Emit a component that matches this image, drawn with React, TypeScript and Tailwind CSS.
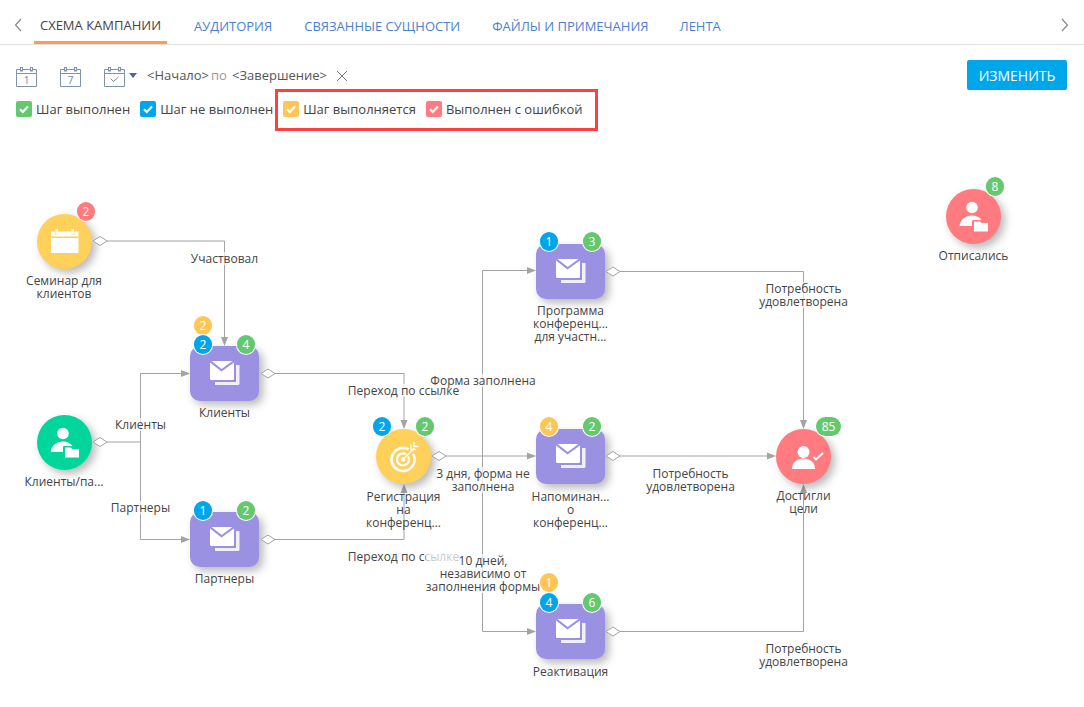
import React from "react";

type Badge = { x: number; y: number; n: string; c: string; w?: number };

const GREEN = "bg-[#64c86e]";
const BLUE = "bg-[#00a6ea]";
const YELLOW = "bg-[#ffc655]";
const RED = "bg-[#ff7b7f]";

function Check() {
  return (
    <svg width="16" height="16" viewBox="0 0 16 16">
      <path d="M4 8.2 L6.8 11 L12 5.6" fill="none" stroke="#fff" strokeWidth="2.2" />
    </svg>
  );
}

function Legend({ color, label }: { color: string; label: string }) {
  return (
    <div className="flex items-center gap-[4px]">
      <span className={`flex h-[16px] w-[16px] items-center justify-center rounded-[2px] ${color}`}>
        <Check />
      </span>
      <span className="whitespace-nowrap text-[13px] leading-[18px] text-[#444]">{label}</span>
    </div>
  );
}

function Cal({ text, check }: { text?: string; check?: boolean }) {
  return (
    <svg width="21" height="21" viewBox="0 0 21 21" fill="none" stroke="#7f93ad" strokeWidth="1">
      <path d="M0.5 3.5 H20.5 V20.5 H0.5 Z" />
      <path d="M0.5 7.5 H20.5" />
      <rect x="4.5" y="1.5" width="2" height="3.5" fill="#fff" />
      <rect x="14.5" y="1.5" width="2" height="3.5" fill="#fff" />
      {text && (
        <text x="10.5" y="17.5" textAnchor="middle" fontSize="10" fill="#6f85a0" stroke="none" fontFamily="'Open Sans', sans-serif">
          {text}
        </text>
      )}
      {check && <path d="M6.5 12.5 L9.5 15.5 L14.5 11" />}
    </svg>
  );
}

function Mail() {
  return (
    <svg width="30" height="25" viewBox="0 0 30 25" fill="#fff">
      <path d="M0 1.5 L11.5 10.5 L24 1.5 V17.5 Q24 19 22.5 19 H1.5 Q0 19 0 17.5 Z" />
      <path d="M1.5 0 H22.5 L11.7 8 Z" />
      <path d="M26 4 H29.5 V22.5 Q29.5 24 28 24 H5 V21 H26 Z" fill="#f1effc" />
    </svg>
  );
}

function PersonFolder() {
  return (
    <svg width="29" height="31" viewBox="0 0 29 31" fill="#fff">
      <circle cx="13" cy="6.5" r="5.8" />
      <path d="M0.5 25 C1.5 18 7 14.5 13 14.5 C17 14.5 20.5 16 22.5 19 H14 Q13 19 13 20 V25 Z" />
      <path d="M15 20.5 H21 L22.5 22 H29 V30.5 H15 Z" />
    </svg>
  );
}

function PersonCheck() {
  return (
    <svg width="32" height="24" viewBox="0 0 32 24" fill="#fff">
      <circle cx="11.5" cy="7" r="6" />
      <path d="M0 24 C0 17 5 13.5 11.5 13.5 C18 13.5 23 17 23 24 Z" />
      <path d="M21.5 12 L24 14.5 L31 8" fill="none" stroke="#fff" strokeWidth="1.8" />
    </svg>
  );
}

function CalWhite() {
  return (
    <svg width="28" height="25" viewBox="0 0 28 25" fill="#fff">
      <path d="M0 2.5 H4 V5.5 H7 V2.5 H20.5 V5.5 H23.5 V2.5 H27.5 V7.5 H0 Z" />
      <rect x="4.5" y="0" width="2.5" height="5" />
      <rect x="20.5" y="0" width="2.5" height="5" />
      <rect x="0" y="9" width="27.5" height="15" />
    </svg>
  );
}

function Target() {
  return (
    <svg width="32" height="32" viewBox="0 0 32 32" fill="none" stroke="#fff">
      <path d="M20.6 8.4 A11.5 11.5 0 1 0 25.1 12.9" strokeWidth="2.6" />
      <path d="M18 13.3 A6 6 0 1 0 20.2 15.5" strokeWidth="2.2" />
      <circle cx="15" cy="18.5" r="2.3" fill="#fff" stroke="none" />
      <path d="M15 18.5 L26 7.5" strokeWidth="1.4" />
      <path d="M23 3.5 V8.5 H28 M26 1 V5.5 H30.5" strokeWidth="1.4" />
    </svg>
  );
}

function Count({ x, y, n, c, w = 18 }: Badge) {
  return (
    <div
      className={`absolute flex h-[19px] items-center justify-center rounded-full text-[12px] leading-none text-white ring-1 ring-white ${c}`}
      style={{ left: x, top: y, width: w }}
    >
      {n}
    </div>
  );
}

function Node({
  x, y, w, shape, children,
}: { x: number; y: number; w: number; shape: string; children: React.ReactNode }) {
  return (
    <div
      className={`absolute flex h-[55px] items-center justify-center ${shape} shadow-[4px_4px_8px_rgba(0,0,0,0.28)]`}
      style={{ left: x, top: y, width: w }}
    >
      {children}
    </div>
  );
}

function Label({
  cx, y, lines, soft,
}: { cx: number; y: number; lines: string[]; soft?: boolean }) {
  return (
    <div
      className={`absolute -translate-x-1/2 whitespace-nowrap text-center text-[12px] leading-[13px] text-[#444] ${soft ? "bg-white/70" : ""}`}
      style={{ left: cx, top: y }}
    >
      {lines.map((l) => (
        <div key={l}>{l}</div>
      ))}
    </div>
  );
}

const diamonds: [number, number][] = [
  [93, 241], [261, 373.5], [93, 442], [261, 539.5], [432, 456],
  [606, 271.5], [606, 456], [606, 631.5],
];

const lines = [
  "M107 241 H224.5 V338",
  "M275 373.5 H404 V421",
  "M107 442 H140.5",
  "M140.5 373.5 V539.5",
  "M140.5 373.5 H182",
  "M140.5 539.5 H182",
  "M275 539.5 H404 V492",
  "M446 456 H528",
  "M482.5 270.5 V631.5",
  "M482.5 270.5 H528",
  "M482.5 631.5 H528",
  "M620 271.5 H803.5 V421",
  "M620 456 H768",
  "M620 631.5 H803.5 V492",
];

const arrows = [
  "M224.5 346 L221 337 H228 Z",
  "M404 429 L400.5 420 H407.5 Z",
  "M404 484 L400.5 493 H407.5 Z",
  "M190 373.5 L181 370 V377 Z",
  "M190 539.5 L181 536 V543 Z",
  "M536 270.5 L527 267 V274 Z",
  "M536 631.5 L527 628 V635 Z",
  "M536 456 L527 452.5 V459.5 Z",
  "M776 456 L767 452.5 V459.5 Z",
  "M803.5 429 L800 420 H807 Z",
  "M803.5 484 L800 493 H807 Z",
];

const TAB = "flex h-[45px] items-center pt-[10px] text-[13px] text-[#4b7fd0]";

export default function App() {
  return (
    <div className="h-[707px] w-[1084px] overflow-hidden bg-white font-['Open_Sans',sans-serif] text-[#444]">
      <div className="flex h-[45px] items-end border-b border-[#e0e0e0]">
        <svg width="34" height="45" viewBox="0 0 34 45" fill="none" stroke="#888" strokeWidth="1.2" className="shrink-0">
          <path d="M21 20 L15.5 26 L21 32" />
        </svg>
        <div className="flex h-[45px]">
          <div className="flex h-[45px] w-[133px] items-center justify-center border-b-[3px] border-[#ff9b57] pt-[12px] text-[13px] text-[#444]">
            СХЕМА КАМПАНИИ
          </div>
          <div className={`${TAB} pl-[27px]`}>АУДИТОРИЯ</div>
          <div className={`${TAB} pl-[32px]`}>СВЯЗАННЫЕ СУЩНОСТИ</div>
          <div className={`${TAB} pl-[32px]`}>ФАЙЛЫ И ПРИМЕЧАНИЯ</div>
          <div className={`${TAB} pl-[31px]`}>ЛЕНТА</div>
        </div>
        <div className="flex-1" />
        <svg width="34" height="45" viewBox="0 0 34 45" fill="none" stroke="#888" strokeWidth="1.2" className="shrink-0">
          <path d="M12 20 L17.5 26 L12 32" />
        </svg>
      </div>

      <div className="relative h-[662px]">
        <div className="flex items-start justify-between pl-[16px] pr-[17px] pt-[15px]">
          <div>
            <div className="flex h-[30px] items-center">
              <div className="mr-[23px] mt-[2px]"><Cal text="1" /></div>
              <div className="mr-[23px] mt-[2px]"><Cal text="7" /></div>
              <div className="mt-[2px]"><Cal check /></div>
              <svg width="12" height="6" viewBox="0 0 12 6" className="ml-[3px] mr-[7px] mt-[2px]">
                <path d="M1 0 H9 L5 5 Z" fill="#51688a" />
              </svg>
              <span className="pt-[1px] text-[13px] text-[#555]">&lt;Начало&gt;</span>
              <span className="ml-[2px] pt-[1px] text-[13px] text-[#999]">по</span>
              <span className="ml-[5px] pt-[1px] text-[13px] text-[#555]">&lt;Завершение&gt;</span>
              <svg width="12" height="12" viewBox="0 0 12 12" className="ml-[9px] mt-[1px]" fill="none" stroke="#777" strokeWidth="1">
                <path d="M1 1 L11 11 M11 1 L1 11" />
              </svg>
            </div>
            <div className="mt-[10px] flex items-center">
              <Legend color={GREEN} label="Шаг выполнен" />
              <div className="w-[10px]" />
              <Legend color={BLUE} label="Шаг не выполнен" />
              <div className="w-[10px]" />
              <Legend color={YELLOW} label="Шаг выполняется" />
              <div className="w-[10px]" />
              <Legend color={RED} label="Выполнен с ошибкой" />
            </div>
          </div>
          <button className="h-[30px] w-[100px] rounded-[2px] bg-[#00a6ea] text-[14px] text-white">
            ИЗМЕНИТЬ
          </button>
        </div>
        <div className="pointer-events-none absolute left-[275px] top-[44px] h-[42px] w-[323px] border-[3px] border-[#ff4040]" />
      </div>

      {/* diagram canvas covers the full page so that coordinates read directly */}
      <div className="pointer-events-none absolute left-0 top-0 h-[707px] w-[1084px]">
        <svg width="1084" height="707" className="absolute left-0 top-0" fill="none">
          {lines.map((d) => (
            <path key={d} d={d} stroke="#a3a3a3" strokeWidth="1" />
          ))}
          {arrows.map((d) => (
            <path key={d} d={d} fill="#a3a3a3" />
          ))}
        </svg>

        <Node x={37} y={214} w={55} shape="rounded-full bg-[#ffd05a]"><CalWhite /></Node>
        <Node x={37} y={415} w={55} shape="rounded-full bg-[#00d69b]"><PersonFolder /></Node>
        <Node x={190} y={346} w={69} shape="rounded-[10px] bg-[#9b91e2]"><Mail /></Node>
        <Node x={190} y={512} w={69} shape="rounded-[10px] bg-[#9b91e2]"><Mail /></Node>
        <Node x={376} y={429} w={55} shape="rounded-full bg-[#ffd05a]"><Target /></Node>
        <Node x={536} y={244} w={69} shape="rounded-[10px] bg-[#9b91e2]"><Mail /></Node>
        <Node x={536} y={429} w={69} shape="rounded-[10px] bg-[#9b91e2]"><Mail /></Node>
        <Node x={536} y={604} w={69} shape="rounded-[10px] bg-[#9b91e2]"><Mail /></Node>
        <Node x={776} y={429} w={55} shape="rounded-full bg-[#ff7b7f]"><span className="ml-[9px]"><PersonCheck /></span></Node>
        <Node x={946} y={189} w={55} shape="rounded-full bg-[#ff7b7f]"><PersonFolder /></Node>

        <svg width="1084" height="707" className="absolute left-0 top-0">
          {diamonds.map(([x, y]) => (
            <path key={`${x}-${y}`} d={`M${x} ${y} L${x + 7} ${y - 4.5} L${x + 14} ${y} L${x + 7} ${y + 4.5} Z`} fill="#fff" stroke="#a3a3a3" strokeWidth="1" />
          ))}
        </svg>

        <Label cx={64} y={274} lines={["Семинар для", "клиентов"]} />
        <Label cx={224.5} y={252} lines={["Участвовал"]} soft />
        <Label cx={224.5} y={406} lines={["Клиенты"]} />
        <Label cx={140.5} y={418} lines={["Клиенты"]} soft />
        <Label cx={140.5} y={501} lines={["Партнеры"]} soft />
        <Label cx={64} y={475} lines={["Клиенты/па..."]} />
        <Label cx={224.5} y={572} lines={["Партнеры"]} />
        <Label cx={403.5} y={384} lines={["Переход по ссылке"]} soft />
        <Label cx={403.5} y={550} lines={["Переход по ссылке"]} soft />
        <Label cx={483} y={374} lines={["Форма заполнена"]} soft />
        <Label cx={483} y={467} lines={["3 дня, форма не", "заполнена"]} soft />
        <Label cx={483} y={554} lines={["10 дней,", "независимо от", "заполнения формы"]} soft />
        <Label cx={403.5} y={490} lines={["Регистрация", "на", "конференц..."]} />
        <Label cx={570.5} y={304} lines={["Программа", "конференц...", "для участн..."]} />
        <Label cx={570.5} y={490} lines={["Напоминан...", "о", "конференц..."]} />
        <Label cx={570.5} y={665} lines={["Реактивация"]} />
        <Label cx={803.5} y={282} lines={["Потребность", "удовлетворена"]} soft />
        <Label cx={690.5} y={467} lines={["Потребность", "удовлетворена"]} soft />
        <Label cx={803.5} y={642} lines={["Потребность", "удовлетворена"]} soft />
        <Label cx={803.5} y={489} lines={["Достигли", "цели"]} />
        <Label cx={973.5} y={249} lines={["Отписались"]} />

        <Count x={77} y={202} n="2" c={RED} />
        <Count x={194} y={316} n="2" c={YELLOW} />
        <Count x={194} y={335} n="2" c={BLUE} />
        <Count x={237} y={335} n="4" c={GREEN} />
        <Count x={194} y={501} n="1" c={BLUE} />
        <Count x={237} y={501} n="2" c={GREEN} />
        <Count x={373} y={417} n="2" c={BLUE} />
        <Count x={416} y={417} n="2" c={GREEN} />
        <Count x={540} y={232} n="1" c={BLUE} />
        <Count x={583} y={232} n="3" c={GREEN} />
        <Count x={540} y={417} n="4" c={YELLOW} />
        <Count x={583} y={417} n="2" c={GREEN} />
        <Count x={540} y={573} n="1" c={YELLOW} />
        <Count x={540} y={593} n="4" c={BLUE} />
        <Count x={583} y={593} n="6" c={GREEN} />
        <Count x={816} y={417} n="85" c={GREEN} w={25} />
        <Count x={986} y={177} n="8" c={GREEN} />
      </div>
    </div>
  );
}
